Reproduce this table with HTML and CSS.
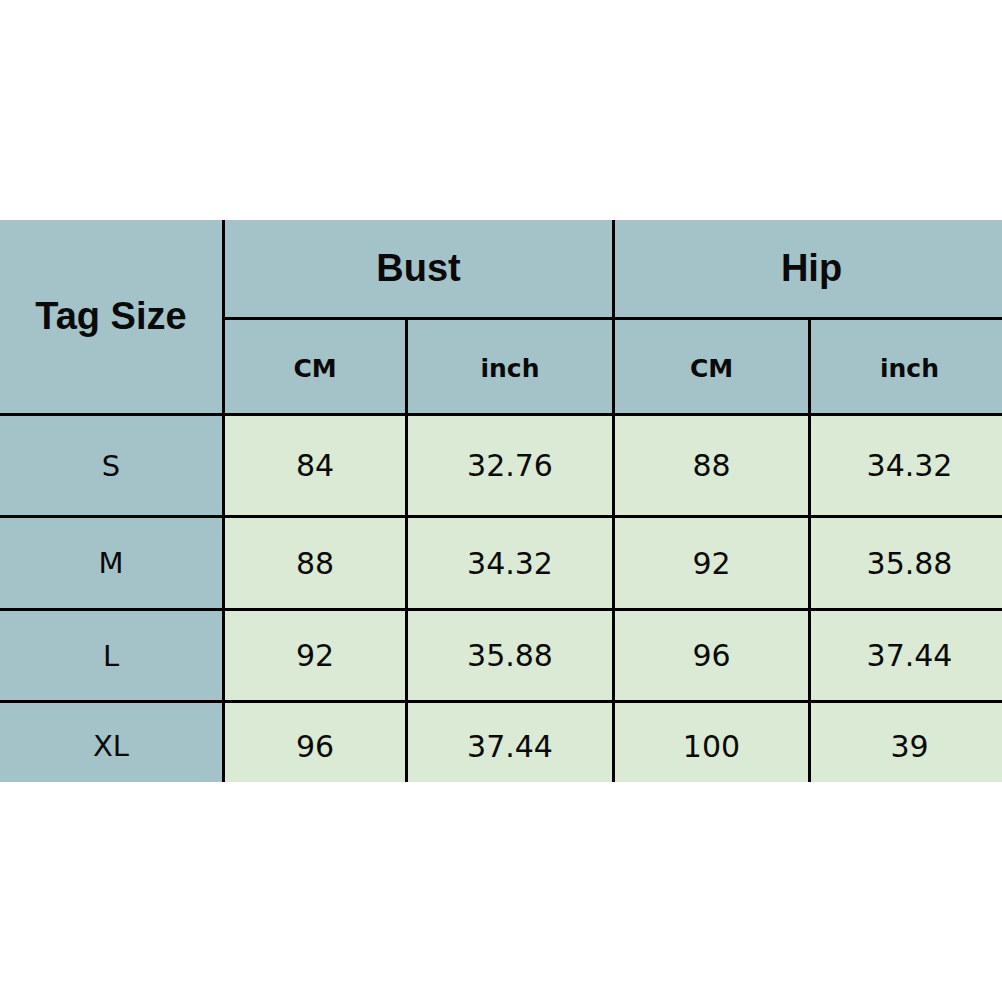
FILE: index.html
```html
<!DOCTYPE html>
<html>
<head>
<meta charset="utf-8">
<link rel="stylesheet" href="styles.css">
</head>
<body>
<div class="page">
  <div class="chart">
    <div class="cell head tag">Tag Size</div>
    <div class="cell head group bust">Bust</div>
    <div class="cell head group hip">Hip</div>
    <div class="cell head unit">CM</div>
    <div class="cell head unit">inch</div>
    <div class="cell head unit">CM</div>
    <div class="cell head unit">inch</div>

    <div class="cell size">S</div>
    <div class="cell val">84</div>
    <div class="cell val">32.76</div>
    <div class="cell val">88</div>
    <div class="cell val">34.32</div>

    <div class="cell size">M</div>
    <div class="cell val">88</div>
    <div class="cell val">34.32</div>
    <div class="cell val">92</div>
    <div class="cell val">35.88</div>

    <div class="cell size">L</div>
    <div class="cell val">92</div>
    <div class="cell val">35.88</div>
    <div class="cell val">96</div>
    <div class="cell val">37.44</div>

    <div class="cell size last">XL</div>
    <div class="cell val last">96</div>
    <div class="cell val last">37.44</div>
    <div class="cell val last">100</div>
    <div class="cell val last">39</div>
  </div>
</div>
</body>
</html>
```

FILE: styles.css
```css
html, body {
  margin: 0;
  padding: 0;
  background: #ffffff;
}

.page {
  width: 1002px;
  height: 1002px;
  padding-top: 220px;
  box-sizing: border-box;
  overflow: hidden;
}

.chart {
  display: grid;
  grid-template-columns: 222px 180px 204px 193px 197px;
  grid-template-rows: 97px 93px 99px 90px 89px 79px;
  gap: 3px;
  background: #000000;
  width: 1008px;
}

.cell {
  display: flex;
  align-items: center;
  justify-content: center;
  color: #0a0a0a;
  background: #dbead4;
  font-family: "DejaVu Sans", sans-serif;
  font-size: 30px;
}

.head {
  background: #a4c3c9;
}

.tag {
  grid-row: 1 / span 2;
  font-family: "Liberation Sans", Arial, sans-serif;
  font-weight: bold;
  font-size: 38px;
}

.group {
  font-family: "Liberation Sans", Arial, sans-serif;
  font-weight: bold;
  font-size: 38px;
  grid-column: span 2;
}

.unit {
  font-weight: bold;
  font-size: 25px;
  padding-top: 4px;
  box-sizing: border-box;
}

.size {
  background: #a4c3c9;
  font-size: 29px;
}

.val {
  font-size: 30px;
}

.last {
  padding-top: 7px;
  box-sizing: border-box;
}
```
